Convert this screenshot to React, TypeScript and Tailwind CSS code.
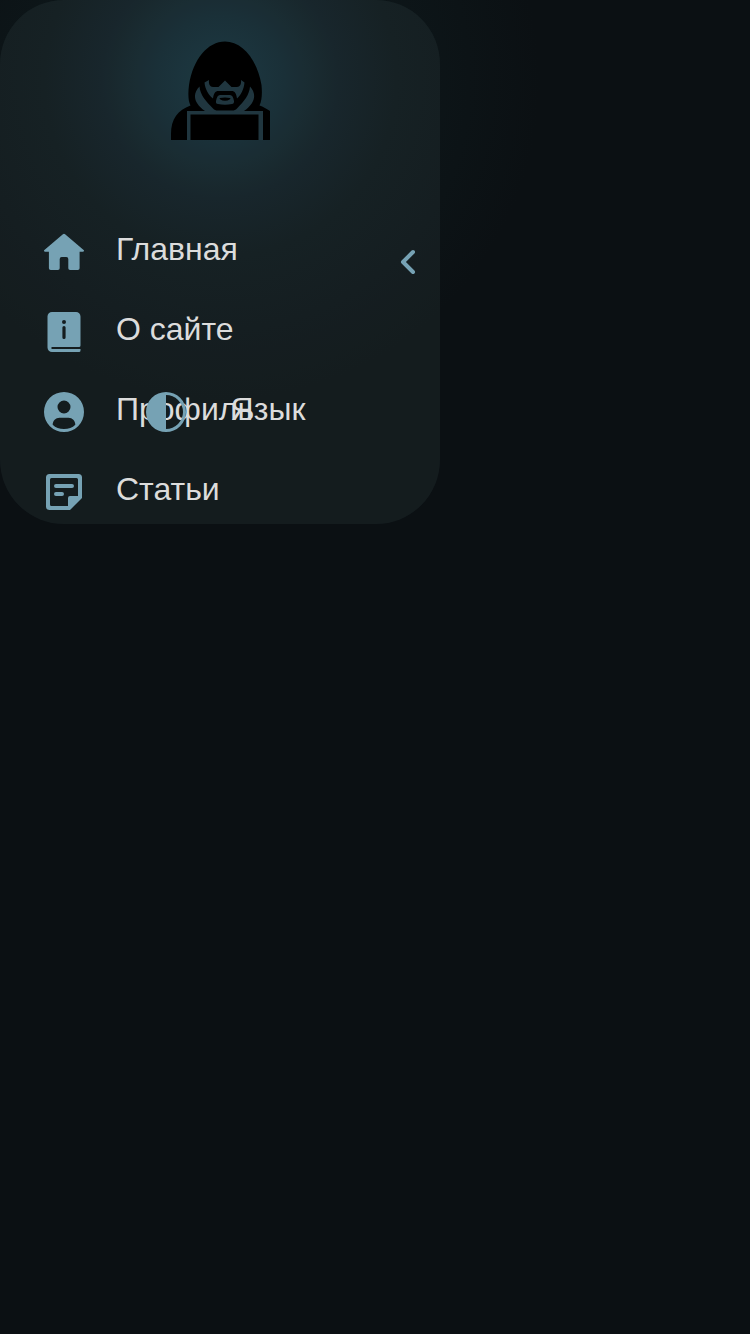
import type { ReactNode } from "react";

type IconProps = { children: ReactNode };

function Icon({ children }: IconProps) {
  return (
    <svg viewBox="0 0 40 40" className="block size-10 shrink-0 fill-[#76a2b4]" aria-hidden="true">
      {children}
    </svg>
  );
}

function HomeIcon() {
  return (
    <Icon>
      <path d="M18.9 2.300a1.600 1.600 0 0 1 2.200 0L39.600 18c.9.8.3 1.700-.8 1.700H35.600V36.200a1.800 1.800 0 0 1-1.800 1.800h-7.700a1.800 1.800 0 0 1-1.800-1.800V27a2 2 0 0 0-2-2h-4.600a2 2 0 0 0-2 2v9.200a1.800 1.800 0 0 1-1.800 1.800H6.700A1.800 1.800 0 0 1 4.900 36.200V19.700H1.200c-1.100 0-1.700-.9-.8-1.700Z" />
    </Icon>
  );
}

function BookIcon() {
  return (
    <Icon>
      <path
        fillRule="evenodd"
        d="M8 0h24a4.500 4.500 0 0 1 4.500 4.500V33.500a1.500 1.500 0 0 1-1.500 1.500H7.500v2h29v1.500a1.500 1.500 0 0 1-1.500 1.500H8a4.500 4.500 0 0 1-4.500-4.500v-31A4.500 4.500 0 0 1 8 0Zm12 8a2 2 0 1 0 0 4 2 2 0 0 0 0-4Zm0 6a1.600 1.600 0 0 0-1.600 1.600v9.800a1.600 1.600 0 0 0 3.200 0v-9.800A1.600 1.600 0 0 0 20 14Z"
      />
    </Icon>
  );
}

function ProfileIcon() {
  return (
    <Icon>
      <path
        fillRule="evenodd"
        d="M20 0a20 20 0 1 0 0 40 20 20 0 0 0 0-40Zm0 8.500a6.500 6.500 0 1 1 0 13 6.500 6.500 0 0 1 0-13ZM15.500 25.700h9c3.800 0 6.800 3 6.800 7.100C28.500 35.800 24.500 37 20 37s-8.500-1.200-11.300-4.200c0-4.100 3-7.100 6.800-7.100Z"
      />
    </Icon>
  );
}

function ArticleIcon() {
  return (
    <Icon>
      <path
        fillRule="evenodd"
        d="M5.500 2h29A3.500 3.500 0 0 1 38 5.500V26L26 38H5.500A3.500 3.500 0 0 1 2 34.500v-29A3.500 3.500 0 0 1 5.500 2ZM7.500 6A1.500 1.500 0 0 0 6 7.500v25A1.500 1.500 0 0 0 7.500 34H24V26a2 2 0 0 1 2-2h8V7.500A1.500 1.500 0 0 0 32.500 6Z"
      />
      <path d="M12 12h16a2 2 0 0 1 0 4H12a2 2 0 0 1 0-4ZM12 20h6a2 2 0 0 1 0 4h-6a2 2 0 0 1 0-4Z" />
    </Icon>
  );
}

function ContrastIcon() {
  return (
    <Icon>
      <path fillRule="evenodd" d="M20 0a20 20 0 1 1 0 40 20 20 0 0 1 0-40Zm0 3v34a17 17 0 0 0 0-34Z" />
    </Icon>
  );
}

function HackerLogo() {
  return (
    <svg viewBox="0 0 100 100" className="block size-[100px]" aria-hidden="true">
      <path d="M55 1.500C38 1.500 23 19 19 45c-1 8-1 16 1.500 20.500C8 70 1 79 1 94v6h99V71c-3-2-7-4.500-10.500-5.500 2.500-5 2.800-12.500 2-20.500C87 19 72 1.500 55 1.500Z" />
      <path
        className="fill-[#20363f]"
        d="M34.500 42.500 39 40c-.5 4 1 7 4 7h5.500L55 40.500 61.500 47H67c3 0 4.500-3 4-7l3.500 2.500c-.5 7-4 13-7.500 16-.7-5-2-7.500-5.500-7.500h-13c-3.500 0-4.800 2.500-5.500 7.500-4-3-8-9-8.500-16Z"
      />
      <path className="fill-[#20363f]" d="M50 55h10q3 0 4 6 .2 3-2 3-7 1.500-14 0-2.500 0-2-3 1-6 4-6Z" />
      <path d="M50 58q5-1 10 0 1 .6 0 1.200-5 3-10 0-1-.6 0-1.200Z" />
      <path
        className="fill-[#20363f]"
        d="M29.500 46.500c-7 7-6.500 16 5.500 24.500H17v29h3.500V74.500h68V100H93V71H74c12-8.500 12.500-17.500 6-24.500-.5 8-6 15-13 22-1.500 1.500-2.500 2-5 2H48c-2.500 0-3.500-.5-5-2-7-7-13-14-13.500-22Z"
      />
    </svg>
  );
}

const items = [
  { label: "Главная", icon: <HomeIcon /> },
  { label: "О сайте", icon: <BookIcon /> },
  { label: "Профиль", icon: <ProfileIcon /> },
  { label: "Статьи", icon: <ArticleIcon /> },
];

export default function App() {
  return (
    <main className="h-[1334px] w-[750px] overflow-hidden bg-[#0b1013] bg-[radial-gradient(circle_320px_at_220px_80px,#15303a_0%,#12262e_20%,#0f1b21_37%,#0d1619_55%,#0c1316_78%,#0b1013_100%)] font-['Liberation_Sans',sans-serif] text-[32px] text-[#dcdcdc]">
      <aside className="relative flex h-[524px] w-[440px] flex-col overflow-hidden rounded-[64px] bg-[#b2d8db]/[0.06] pt-10">
        <div className="flex h-[172px] shrink-0 justify-center">
          <HackerLogo />
        </div>
        <nav className="flex flex-col">
          {items.map(({ label, icon }) => (
            <a key={label} className="flex h-20 shrink-0 items-center gap-8 pl-11">
              {icon}
              <span className="-mt-1.5 leading-9">{label}</span>
            </a>
          ))}
        </nav>
        <button className="absolute left-[400px] top-[248px]" aria-label="Свернуть">
          <svg viewBox="0 0 16 28" className="block h-7 w-4 fill-none stroke-[#76a2b4] stroke-4" strokeLinecap="round" strokeLinejoin="round" aria-hidden="true">
            <path d="M13 4 3 14l10 10" />
          </svg>
        </button>
        <div className="absolute left-[146px] top-[392px] flex items-center gap-[44.6px]">
          <ContrastIcon />
          <span className="-mt-1.5 leading-9">Язык</span>
        </div>
      </aside>
    </main>
  );
}
